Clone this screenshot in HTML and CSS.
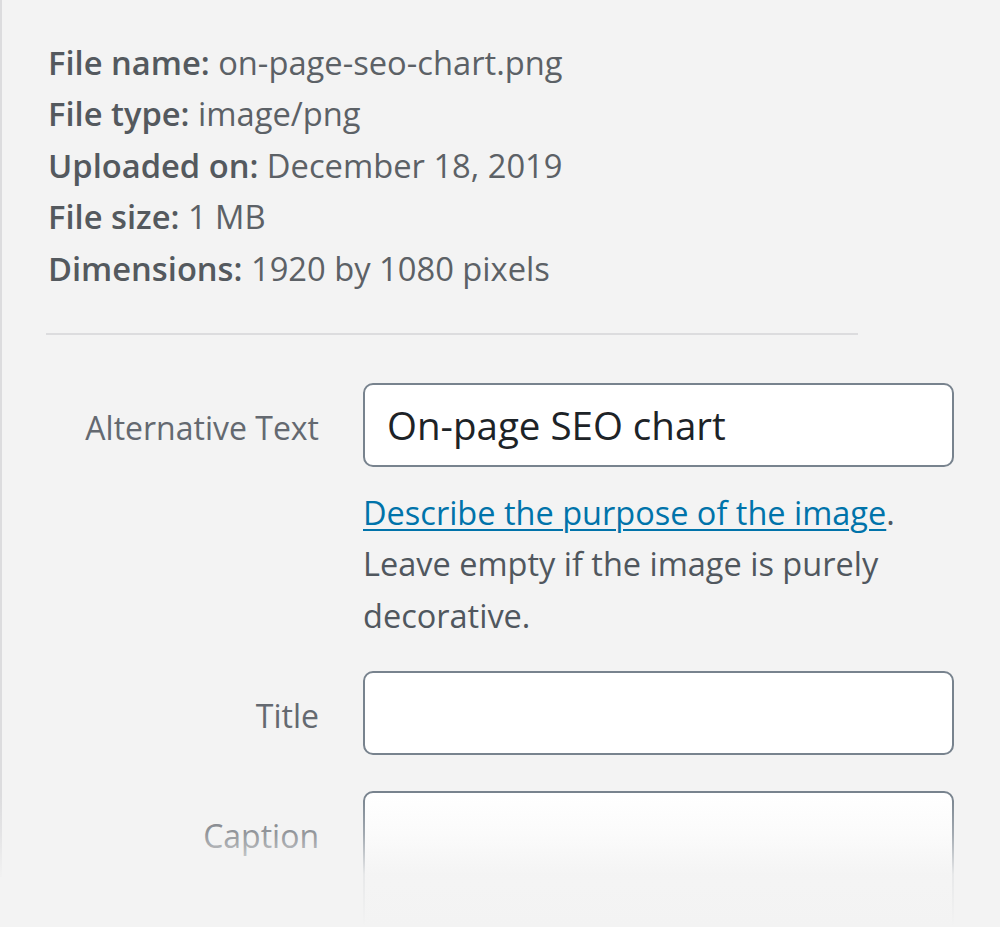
FILE: index.html
```html
<!DOCTYPE html>
<html lang="en">
<head>
<meta charset="utf-8">
<title>Attachment details</title>
<link rel="stylesheet" href="styles.css">
</head>
<body>
<div class="sidebar">
  <div class="details">
    <div class="detail"><strong>File name:</strong> on-page-seo-chart.png</div>
    <div class="detail"><strong>File type:</strong> image/png</div>
    <div class="detail"><strong>Uploaded on:</strong> December 18, 2019</div>
    <div class="detail"><strong>File size:</strong> 1 MB</div>
    <div class="detail"><strong>Dimensions:</strong> 1920 by 1080 pixels</div>
  </div>
  <div class="divider"></div>
  <div class="settings">
    <div class="row">
      <label class="label" for="alt">Alternative Text</label>
      <div class="field">
        <input class="input" id="alt" type="text" value="On-page SEO chart">
        <p class="help"><a class="link" href="#">Describe the purpose of the image</a>.<br>Leave empty if the image is purely decorative.</p>
      </div>
    </div>
    <div class="row row-title">
      <label class="label" for="title">Title</label>
      <div class="field">
        <input class="input" id="title" type="text" value="">
      </div>
    </div>
    <div class="row row-caption">
      <label class="label label-top" for="caption">Caption</label>
      <div class="field">
        <textarea class="input textarea" id="caption"></textarea>
      </div>
    </div>
  </div>
</div>
<div class="fade"></div>
</body>
</html>
```
FILE: styles.css
```css
html, body {
  margin: 0;
  padding: 0;
  background: #f3f3f3;
  overflow: hidden;
}
body {
  position: relative;
  width: 1000px;
  height: 927px;
  font-family: "Open Sans", "Noto Sans", sans-serif;
  color: #646970;
}
.sidebar {
  height: 877px;
  border-left: 2px solid #dcdcde;
  box-sizing: border-box;
}
.details {
  padding: 37px 0 0 46px;
  font-size: 32.7px;
  line-height: 51.4px;
  color: #5c6166;
}
.details strong {
  font-weight: 600;
  color: #54595e;
}
.divider {
  margin: 39px 0 0 44px;
  width: 812px;
  height: 2px;
  background: #dcdcde;
}
.settings {
  margin-top: 48px;
}
.row {
  display: grid;
  grid-template-columns: 317px 591px;
  column-gap: 44px;
}
.row-title {
  margin-top: 30px;
}
.row-caption {
  margin-top: 33px;
}
.label {
  text-align: right;
  font-size: 32px;
  line-height: 84px;
  padding-top: 3px;
  color: #646970;
}
.label-top {
  line-height: 51.4px;
  padding-top: 19px;
}
.input {
  display: block;
  width: 591px;
  height: 84px;
  box-sizing: border-box;
  margin: 0;
  border: 2.8px solid #78838e;
  border-radius: 10px;
  background: #fff;
  padding: 0 22px;
  font-family: "Open Sans", "Noto Sans", sans-serif;
  font-size: 38.5px;
  color: #1d2327;
  outline: none;
}
.textarea {
  height: 160px;
  resize: none;
}
.help {
  margin: 20px 0 0;
  font-size: 32.5px;
  line-height: 51.4px;
  color: #50575e;
}
.link {
  color: #0073aa;
  text-decoration: underline;
  text-decoration-thickness: 2px;
  text-underline-offset: 4px;
}
.fade {
  position: absolute;
  left: 0;
  right: 0;
  top: 795px;
  bottom: 0;
  background: linear-gradient(to bottom, rgba(243,243,243,0) 0%, rgba(243,243,243,0.35) 30%, rgba(243,243,243,0.9) 60%, #f3f3f3 100%);
  pointer-events: none;
}
```
